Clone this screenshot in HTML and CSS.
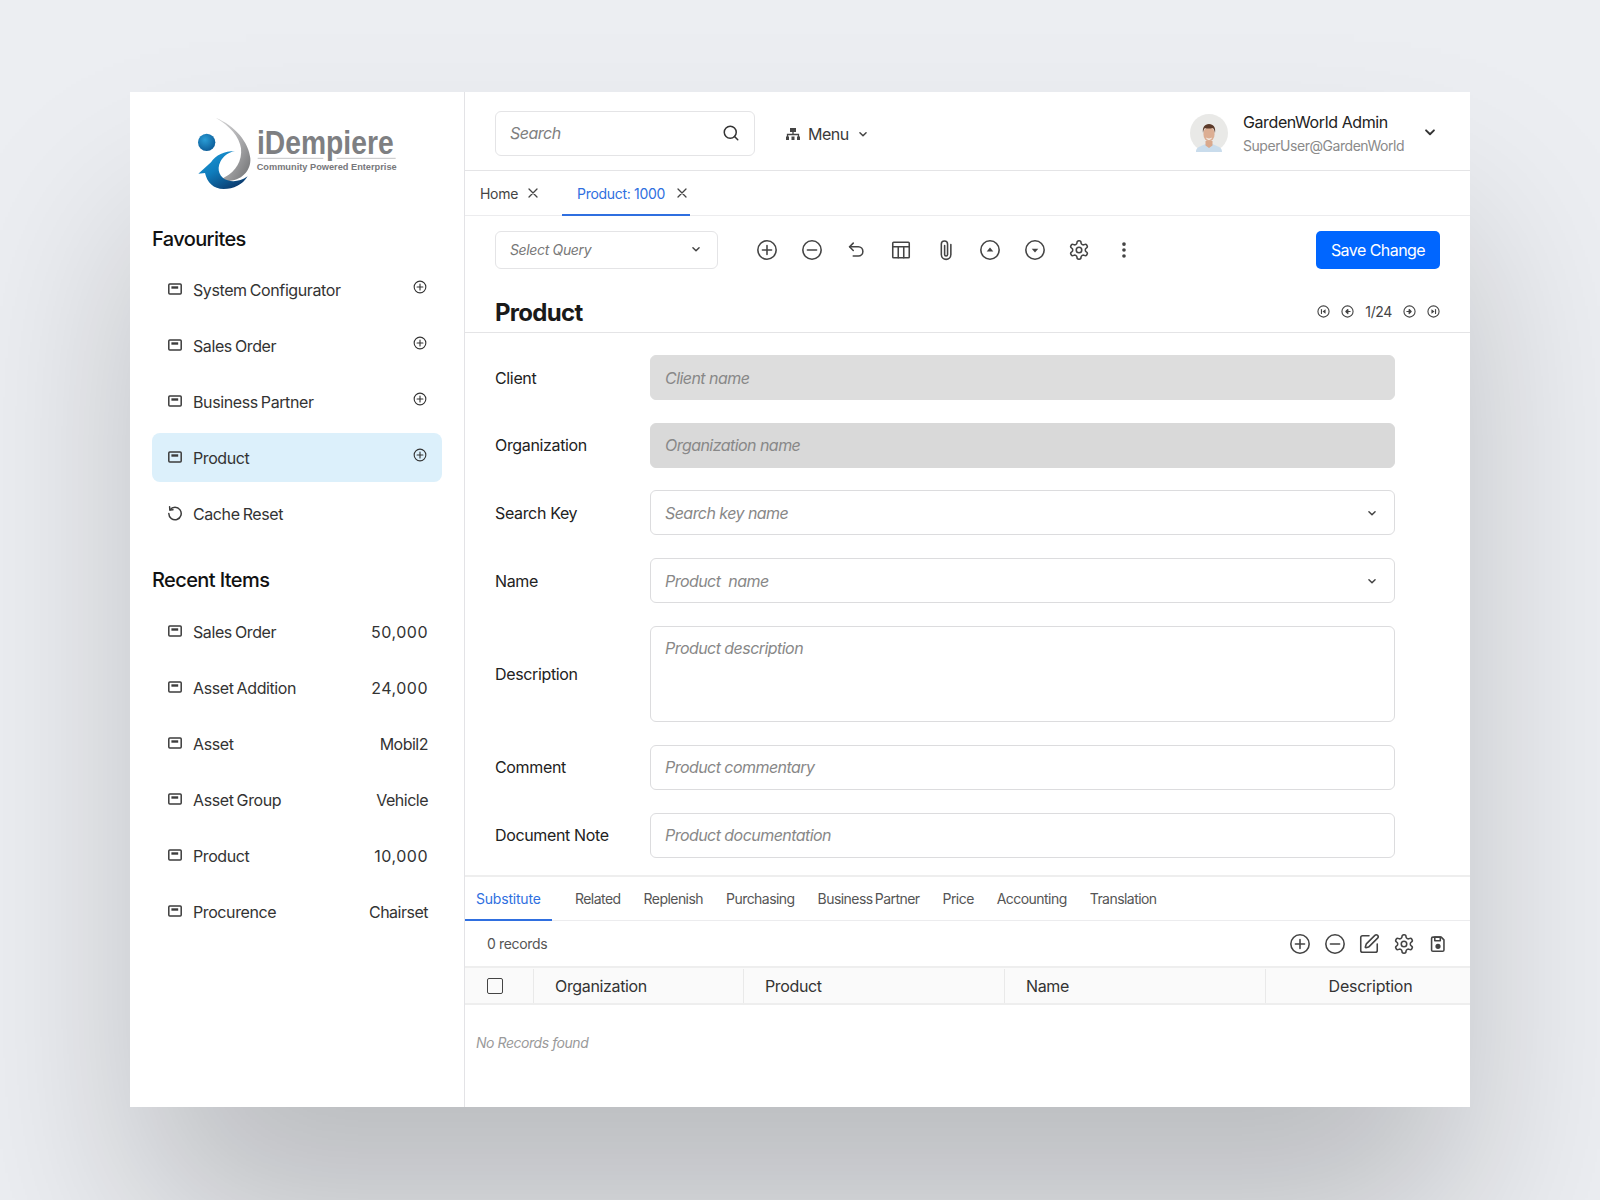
FILE: index.html
```html
<!DOCTYPE html>
<html lang="en">
<head>
    <meta charset="UTF-8">
    <title>iDempiere - Product</title>
    <link rel="stylesheet" href="styles.css">
</head>
<body>
    <!-- Shared icons -->
    <svg class="sprite" xmlns="http://www.w3.org/2000/svg">
        <symbol id="i-doc" viewBox="0 0 16 16"><rect x="1.800" y="3" width="12.400" height="10" rx="1"/><path d="M4.400 5.300h6.800v2.400H4.400z" fill="currentColor" stroke="none"/></symbol>
        <symbol id="i-plus" viewBox="0 0 24 24"><circle cx="12" cy="12" r="10"/><path d="M12 7v10M7 12h10"/></symbol>
        <symbol id="i-minus" viewBox="0 0 24 24"><circle cx="12" cy="12" r="10"/><path d="M7 12h10"/></symbol>
        <symbol id="i-undo" viewBox="0 0 24 24"><path d="M9 4.500 5 8.500l4 4"/><path d="M5 8.500h9.500a5 5 0 0 1 0 10H9"/></symbol>
        <symbol id="i-table" viewBox="0 0 24 24"><rect x="3" y="3.500" width="18" height="17" rx="1"/><path d="M3 8.500h18M9 8.500v12M15 8.500v12" /></symbol>
        <symbol id="i-clip" viewBox="0 0 24 24"><path d="M10.500 7v10a1.600 1.600 0 0 0 3.200 0V5.500a3.400 3.400 0 0 0-6.800 0V17a5.200 5.200 0 0 0 10.400 0V6"/></symbol>
        <symbol id="i-up" viewBox="0 0 24 24"><circle cx="12" cy="12" r="10"/><path d="M12 9.300l3.600 4.200H8.400z" fill="currentColor" stroke="none"/></symbol>
        <symbol id="i-down" viewBox="0 0 24 24"><circle cx="12" cy="12" r="10"/><path d="M12 14.700l3.600-4.200H8.400z" fill="currentColor" stroke="none"/></symbol>
        <symbol id="i-gear" viewBox="0 0 24 24"><path d="M12.220 2h-.44a2 2 0 0 0-2 2v.18a2 2 0 0 1-1 1.730l-.43.25a2 2 0 0 1-2 0l-.15-.08a2 2 0 0 0-2.730.73l-.22.38a2 2 0 0 0 .73 2.730l.15.1a2 2 0 0 1 1 1.720v.51a2 2 0 0 1-1 1.740l-.15.09a2 2 0 0 0-.73 2.730l.22.38a2 2 0 0 0 2.730.73l.15-.08a2 2 0 0 1 2 0l.43.25a2 2 0 0 1 1 1.730V20a2 2 0 0 0 2 2h.44a2 2 0 0 0 2-2v-.18a2 2 0 0 1 1-1.730l.43-.25a2 2 0 0 1 2 0l.15.08a2 2 0 0 0 2.730-.73l.22-.39a2 2 0 0 0-.73-2.730l-.15-.08a2 2 0 0 1-1-1.740v-.5a2 2 0 0 1 1-1.740l.15-.09a2 2 0 0 0 .73-2.730l-.22-.38a2 2 0 0 0-2.730-.73l-.15.08a2 2 0 0 1-2 0l-.43-.25a2 2 0 0 1-1-1.730V4a2 2 0 0 0-2-2z"/><circle cx="12" cy="12" r="3"/></symbol>
        <symbol id="i-chev" viewBox="0 0 16 16"><path d="M4.500 6.500 8 10l3.500-3.500"/></symbol>
        <symbol id="i-close" viewBox="0 0 12 12"><path d="M2 2l8 8M10 2l-8 8"/></symbol>
        <symbol id="i-first" viewBox="0 0 14 14"><circle cx="7" cy="7" r="6"/><path d="M4.800 4.800v4.400"/><path d="M9.200 4.600v4.800L5.900 7z" fill="currentColor" stroke="none"/></symbol>
        <symbol id="i-prev" viewBox="0 0 14 14"><circle cx="7" cy="7" r="6"/><path d="M7.400 4.800 5.200 7l2.200 2.200z" fill="currentColor"/><path d="M7 7h2.800"/></symbol>
        <symbol id="i-next" viewBox="0 0 14 14"><circle cx="7" cy="7" r="6"/><path d="M6.600 4.800 8.800 7l-2.200 2.200z" fill="currentColor"/><path d="M7 7H4.200"/></symbol>
        <symbol id="i-last" viewBox="0 0 14 14"><circle cx="7" cy="7" r="6"/><path d="M9.200 4.800v4.400"/><path d="M4.800 4.600v4.800L8.100 7z" fill="currentColor" stroke="none"/></symbol>
    </svg>

    <div class="app">
        <!-- Sidebar -->
        <aside class="sidebar">
            <svg class="logo" viewBox="0 0 675 270" xmlns="http://www.w3.org/2000/svg">
                <defs>
                    <linearGradient id="logoGrey" x1="0" y1="0" x2="1" y2="1">
                        <stop offset="0" stop-color="#d9d9da"/>
                        <stop offset="0.55" stop-color="#a9a9ab"/>
                        <stop offset="1" stop-color="#6d6e70"/>
                    </linearGradient>
                    <linearGradient id="logoBlue" x1="0" y1="0" x2="0.7" y2="1">
                        <stop offset="0" stop-color="#1f9ad6"/>
                        <stop offset="0.5" stop-color="#0f7dbd"/>
                        <stop offset="1" stop-color="#0b3b6e"/>
                    </linearGradient>
                    <radialGradient id="logoBall" cx="0.4" cy="0.35" r="0.7">
                        <stop offset="0" stop-color="#2a9dd6"/>
                        <stop offset="1" stop-color="#0b5a96"/>
                    </radialGradient>
                </defs>
                <circle cx="65" cy="112" r="26" fill="url(#logoBall)"/>
                <path d="M92 38C150 62 192 112 196 160 199 200 165 232 118 228 112 226 112 220 120 216 152 200 172 168 168 130 164 96 134 62 92 38Z" fill="url(#logoGrey)"/>
                <path d="M150 138C118 138 92 150 78 172L40 206 60 204C66 232 86 252 116 252 146 252 172 240 188 214 168 228 146 232 128 226 104 218 94 194 106 170 114 154 130 142 150 138Z" fill="url(#logoBlue)"/>
                <text class="logo-name" x="216" y="148" textLength="410" lengthAdjust="spacingAndGlyphs">iDempiere</text>
                <path class="logo-rule" d="M218 160H415M455 160H632"/>
                <text class="logo-tag" x="215" y="194" textLength="420" lengthAdjust="spacingAndGlyphs">Community Powered Enterprise</text>
            </svg>

            <h3 class="side-title">Favourites</h3>
            <ul class="side-list">
                <li class="side-item"><svg class="ico ico-doc"><use href="#i-doc"/></svg><span>System Configurator</span><svg class="ico ico-add"><use href="#i-plus"/></svg></li>
                <li class="side-item"><svg class="ico ico-doc"><use href="#i-doc"/></svg><span>Sales Order</span><svg class="ico ico-add"><use href="#i-plus"/></svg></li>
                <li class="side-item"><svg class="ico ico-doc"><use href="#i-doc"/></svg><span>Business Partner</span><svg class="ico ico-add"><use href="#i-plus"/></svg></li>
                <li class="side-item selected"><svg class="ico ico-doc"><use href="#i-doc"/></svg><span>Product</span><svg class="ico ico-add"><use href="#i-plus"/></svg></li>
                <li class="side-item">
                    <svg class="ico ico-doc" viewBox="0 0 16 16"><path d="M2.600 1.800 2.900 5l3.100-.3"/><path d="M3 4.900A6.200 6.200 0 1 1 1.800 8.600"/></svg>
                    <span>Cache Reset</span>
                </li>
            </ul>

            <h3 class="side-title recent">Recent Items</h3>
            <ul class="side-list">
                <li class="side-item"><svg class="ico ico-doc"><use href="#i-doc"/></svg><span>Sales Order</span><em class="num">50,000</em></li>
                <li class="side-item"><svg class="ico ico-doc"><use href="#i-doc"/></svg><span>Asset Addition</span><em class="num">24,000</em></li>
                <li class="side-item"><svg class="ico ico-doc"><use href="#i-doc"/></svg><span>Asset</span><em>Mobil2</em></li>
                <li class="side-item"><svg class="ico ico-doc"><use href="#i-doc"/></svg><span>Asset Group</span><em>Vehicle</em></li>
                <li class="side-item"><svg class="ico ico-doc"><use href="#i-doc"/></svg><span>Product</span><em class="num">10,000</em></li>
                <li class="side-item"><svg class="ico ico-doc"><use href="#i-doc"/></svg><span>Procurence</span><em>Chairset</em></li>
            </ul>
        </aside>

        <main class="main">
            <!-- Top bar -->
            <header class="topbar">
                <div class="search">
                    <span>Search</span>
                    <svg class="ico ico-search" viewBox="0 0 24 24"><circle cx="11" cy="11" r="8"/><path d="m21 21-4.300-4.300"/></svg>
                </div>
                <div class="menu">
                    <svg class="menu-icon" viewBox="0 0 16 16"><path d="M5 2h6v4H5z" fill="currentColor"/><path d="M8 6v3M2.500 11V8.500h11V11" fill="none" stroke="currentColor" stroke-width="1.300"/><path d="M1 10.500h3V14H1zM6.500 10.500h3V14h-3zM12 10.500h3V14h-3z" fill="currentColor"/></svg>
                    <span>Menu</span>
                    <svg class="ico ico-chev-sm"><use href="#i-chev"/></svg>
                </div>
                <div class="user">
                    <svg class="avatar" viewBox="0 0 38 38">
                        <circle cx="19" cy="19" r="19" fill="#e9e9e7"/>
                        <path d="M6 38c0-2 .5-4 4-5.500l5.500-2.500 7 0 5.500 2.500c3.500 1.500 4 3.500 4 5.500z" fill="#c9dcec"/>
                        <path d="M15.500 27h7v4.500l-3.500 2.500-3.500-2.500z" fill="#d9a88c"/>
                        <ellipse cx="19" cy="20" rx="5.600" ry="7.500" fill="#dcae93"/>
                        <path d="M13 19c-.8-5.500 1.500-9 6-9s7 3.500 6 9c-.6-3-1.300-4.500-2.500-5-2.500.8-5.500.8-7.500 0-1 .8-1.600 2.500-2 5z" fill="#5b3a29"/>
                        <path d="M16 23.500c2 1.300 4 1.300 6 0-.6 1.800-1.600 2.400-3 2.400s-2.400-.6-3-2.400z" fill="#f4efe9"/>
                    </svg>
                    <div class="user-text">
                        <div class="user-name">GardenWorld Admin</div>
                        <div class="user-role">SuperUser@GardenWorld</div>
                    </div>
                    <svg class="ico ico-chev-lg"><use href="#i-chev"/></svg>
                </div>
            </header>

            <!-- Window tabs -->
            <nav class="win-tabs">
                <div class="win-tab">Home <svg class="ico ico-close"><use href="#i-close"/></svg></div>
                <div class="win-tab active"><span>Product: 1000</span> <svg class="ico ico-close"><use href="#i-close"/></svg></div>
            </nav>

            <!-- Toolbar -->
            <div class="toolbar">
                <div class="query">
                    <span>Select Query</span>
                    <svg class="ico ico-chev-sm"><use href="#i-chev"/></svg>
                </div>
                <div class="tools">
                    <svg class="ico tool"><use href="#i-plus"/></svg>
                    <svg class="ico tool"><use href="#i-minus"/></svg>
                    <svg class="ico tool"><use href="#i-undo"/></svg>
                    <svg class="ico tool"><use href="#i-table"/></svg>
                    <svg class="ico tool"><use href="#i-clip"/></svg>
                    <svg class="ico tool"><use href="#i-up"/></svg>
                    <svg class="ico tool"><use href="#i-down"/></svg>
                    <svg class="ico tool"><use href="#i-gear"/></svg>
                    <svg class="tool dots" viewBox="0 0 24 24"><circle cx="12" cy="5.500" r="2"/><circle cx="12" cy="12" r="2"/><circle cx="12" cy="18.500" r="2"/></svg>
                </div>
                <button class="save-btn">Save Change</button>
            </div>

            <div class="title-row">
                <h1>Product</h1>
                <div class="pager">
                    <svg class="ico page-ico"><use href="#i-first"/></svg>
                    <svg class="ico page-ico"><use href="#i-prev"/></svg>
                    <span>1/24</span>
                    <svg class="ico page-ico"><use href="#i-next"/></svg>
                    <svg class="ico page-ico"><use href="#i-last"/></svg>
                </div>
            </div>

            <!-- Form -->
            <form class="form">
                <label>Client</label>
                <div class="field disabled">Client name</div>
                <label>Organization</label>
                <div class="field disabled darker">Organization name</div>
                <label>Search Key</label>
                <div class="field">Search key name<svg class="ico ico-chev-sm"><use href="#i-chev"/></svg></div>
                <label>Name</label>
                <div class="field">Product&nbsp; name<svg class="ico ico-chev-sm"><use href="#i-chev"/></svg></div>
                <label>Description</label>
                <div class="field area">Product description</div>
                <label>Comment</label>
                <div class="field">Product commentary</div>
                <label>Document Note</label>
                <div class="field">Product documentation</div>
            </form>

            <!-- Detail tabs -->
            <nav class="sub-tabs">
                <div class="sub-tab active">Substitute</div>
                <div class="sub-tab">Related</div>
                <div class="sub-tab">Replenish</div>
                <div class="sub-tab">Purchasing</div>
                <div class="sub-tab">Business Partner</div>
                <div class="sub-tab">Price</div>
                <div class="sub-tab">Accounting</div>
                <div class="sub-tab">Translation</div>
            </nav>

            <div class="records">
                <span>0 records</span>
                <div class="record-tools">
                    <svg class="ico tool"><use href="#i-plus"/></svg>
                    <svg class="ico tool"><use href="#i-minus"/></svg>
                    <svg class="ico tool" viewBox="0 0 24 24"><path d="M12 3H5a2 2 0 0 0-2 2v14a2 2 0 0 0 2 2h14a2 2 0 0 0 2-2v-7"/><path d="M18.375 2.625a1 1 0 0 1 3 3l-9.013 9.014a2 2 0 0 1-.853.505l-2.873.84a.5.5 0 0 1-.62-.62l.84-2.873a2 2 0 0 1 .506-.852z"/></svg>
                    <svg class="ico tool"><use href="#i-gear"/></svg>
                    <svg class="ico tool" viewBox="0 0 24 24"><path d="M6.500 4.500h9l3 3v11a1.500 1.500 0 0 1-1.500 1.500H6.500A1.500 1.500 0 0 1 5 18.500V6a1.500 1.500 0 0 1 1.500-1.500z"/><path d="M8.500 4.500h6v4h-6z"/><circle cx="12" cy="14.500" r="2" fill="currentColor"/></svg>
                </div>
            </div>

            <div class="grid-head">
                <div class="cell check"><span class="checkbox"></span></div>
                <div class="cell">Organization</div>
                <div class="cell">Product</div>
                <div class="cell">Name</div>
                <div class="cell center">Description</div>
            </div>
            <p class="empty">No Records found</p>
        </main>
    </div>
</body>
</html>
```

FILE: styles.css
```css
* {
    margin: 0;
    padding: 0;
    box-sizing: border-box;
}

body {
    height: 1200px;
    background: #eceef2;
    font-family: "Inter", "Noto Sans", sans-serif;
    font-size: 16px;
    color: #333;
    letter-spacing: -0.35px;
    overflow: hidden;
}

.sprite {
    display: none;
}

ul {
    list-style: none;
}

.ico {
    fill: none;
    stroke: currentColor;
    stroke-width: 1.5;
    stroke-linecap: round;
    stroke-linejoin: round;
    flex: none;
}

.app {
    display: flex;
    width: 1340px;
    height: 1015px;
    margin: 92px 0 0 130px;
    background: #fff;
    box-shadow: 0 128px 180px -10px rgba(0, 0, 0, 0.21);
}

/* Sidebar */
.sidebar {
    width: 335px;
    flex: none;
    padding: 13px 22px 0;
    border-right: 1px solid #e3e3e6;
}

.main {
    flex: 1;
    min-width: 0;
}

.logo {
    display: block;
    width: 225px;
    height: 90px;
    margin-left: 33px;
    overflow: visible;
}

.logo-name {
    font-family: "Liberation Sans", sans-serif;
    font-weight: 700;
    font-size: 97px;
    fill: #7e7f82;
    letter-spacing: 0;
}

.logo-tag {
    font-family: "Liberation Sans", sans-serif;
    font-weight: 700;
    font-size: 29px;
    fill: #77787b;
    letter-spacing: 0;
}

.logo-rule {
    stroke: #a5a6a8;
    stroke-width: 2;
}

.side-title {
    margin: 32px 0 14.5px;
    font-size: 20px;
    line-height: 24px;
    font-weight: 500;
    letter-spacing: -0.6px;
    color: #111;
}

.side-title.recent {
    margin: 29.5px 0 15px;
}

.side-list {
    display: flex;
    flex-direction: column;
    gap: 7.1px;
}

.side-item {
    display: flex;
    align-items: center;
    height: 49px;
    padding: 0 15px;
    border-radius: 8px;
    letter-spacing: -0.4px;
    word-spacing: -1px;
}

.side-item.selected {
    background: #dcf0fb;
    margin-top: -1px;
    margin-bottom: 1px;
    padding-top: 2px;
}

.side-item span {
    flex: 1;
}

.side-item em {
    margin-right: -1px;
    font-style: normal;
    letter-spacing: -0.5px;
}

.side-item em.num {
    letter-spacing: 0.5px;
}

.ico-doc {
    width: 16px;
    height: 16px;
    margin: 0 10px 2px 0;
    color: #3c3c3c;
    stroke-width: 1.5;
}

.ico-add {
    width: 14px;
    height: 14px;
    margin-bottom: 6px;
    stroke-width: 1.9;
    color: #333;
}

/* Top bar */
.topbar {
    display: flex;
    align-items: center;
    height: 79px;
    padding: 4px 31px 0 30px;
    border-bottom: 1px solid #e4e4e6;
}

.search {
    display: flex;
    align-items: center;
    justify-content: space-between;
    width: 260px;
    height: 45px;
    padding: 0 14px 0 14px;
    border: 1px solid #e4e4e6;
    border-radius: 6px;
    font-style: italic;
    letter-spacing: -0.5px;
    color: #808080;
}

.ico-search {
    width: 18px;
    height: 18px;
    color: #333;
    stroke-width: 2;
}

.menu {
    display: flex;
    align-items: center;
    gap: 7px;
    margin: 2px 0 0 30px;
    letter-spacing: -0.5px;
    color: #3a3a3a;
}

.menu-icon {
    width: 16px;
    height: 16px;
    color: #444;
}

.ico-chev-sm {
    width: 14px;
    height: 14px;
    stroke-width: 1.7;
    color: #444;
}

.user {
    display: flex;
    align-items: center;
    margin-left: auto;
}

.avatar {
    width: 38px;
    height: 38px;
    margin-right: 15px;
}

.user-text {
    width: 178px;
    letter-spacing: -0.4px;
}

.user-name {
    font-size: 16px;
    line-height: 22px;
    color: #222;
}

.user-role {
    margin-top: 3px;
    font-size: 14px;
    line-height: 20px;
    letter-spacing: -0.45px;
    color: #8a8a8a;
}

.ico-chev-lg {
    width: 18px;
    height: 18px;
    color: #333;
    stroke-width: 1.7;
    margin-bottom: 2px;
}

/* Window tabs */
.win-tabs {
    display: flex;
    height: 45px;
    border-bottom: 1px solid #ececee;
}

.win-tab {
    display: flex;
    align-items: center;
    gap: 9px;
    padding: 0 2px 0 15px;
    margin-right: 21px;
    font-size: 14px;
    letter-spacing: -0.3px;
    color: #444;
}

.win-tab.active {
    gap: 11px;
    margin-bottom: -1px;
    border-bottom: 2px solid #2f6fe0;
    padding-top: 1px;
}

.win-tab.active span {
    color: #2f6fe0;
}

.ico-close {
    width: 12px;
    height: 12px;
    stroke-width: 1.3;
    color: #444;
}

/* Toolbar */
.toolbar {
    display: flex;
    align-items: center;
    padding: 15px 30px 0;
}

.query {
    display: flex;
    align-items: center;
    justify-content: space-between;
    width: 223px;
    height: 38px;
    padding: 0 14px 2px 14px;
    border: 1px solid #e4e4e6;
    border-radius: 6px;
    font-size: 14px;
    font-style: italic;
    color: #777;
}

.tools {
    display: flex;
    align-items: center;
    gap: 22.65px;
    margin: 0 0 1px 38px;
    color: #444;
}

.tool {
    width: 22px;
    height: 22px;
    stroke-width: 1.7;
}

.dots {
    fill: #444;
}

.save-btn {
    width: 124px;
    height: 38px;
    margin-left: auto;
    border: none;
    border-radius: 5px;
    background: #0066ff;
    color: #fff;
    font-family: inherit;
    font-size: 16px;
    letter-spacing: -0.55px;
}

.title-row {
    display: flex;
    align-items: center;
    justify-content: space-between;
    margin-top: 29px;
    padding: 0 30px 4px;
    border-bottom: 1px solid #e4e4e6;
}

.title-row h1 {
    font-size: 24px;
    line-height: 30px;
    font-weight: 700;
    letter-spacing: -0.7px;
    color: #1a1a1a;
}

.pager {
    display: flex;
    align-items: center;
    gap: 11px;
    margin-bottom: 3px;
    font-size: 14px;
    color: #444;
}

.page-ico {
    width: 13px;
    height: 13px;
    stroke-width: 1.2;
}

/* Form */
.form {
    display: grid;
    grid-template-columns: 155px 745px;
    row-gap: 22.7px;
    align-items: center;
    padding: 22px 30px 17.5px;
}

.form label {
    color: #222;
}

.field {
    display: flex;
    align-items: center;
    justify-content: space-between;
    height: 45px;
    padding: 0 15px 0 14px;
    border: 1px solid #dcdcde;
    border-radius: 6px;
    font-style: italic;
    letter-spacing: -0.55px;
    color: #888;
}

.field.disabled {
    background: #dddddd;
    border-color: #dddddd;
}

.field.darker {
    background: #d9d9d9;
    border-color: #d9d9d9;
}

.field.area {
    align-items: flex-start;
    height: 96.5px;
    padding-top: 11px;
}

/* Detail tabs */
.sub-tabs {
    display: flex;
    height: 46px;
    border-top: 2px solid #eeeeee;
    border-bottom: 1px solid #ececee;
    font-size: 14px;
    letter-spacing: -0.55px;
    word-spacing: -1.2px;
    color: #555;
}

.sub-tab {
    display: flex;
    align-items: center;
    padding: 0 11.5px;
}

.sub-tab.active {
    width: 87px;
    margin-right: 11.5px;
    margin-bottom: -1px;
    padding: 0 0 0 11px;
    border-bottom: 2px solid #2f6fe0;
    letter-spacing: -0.2px;
    color: #2f6fe0;
}

.records {
    display: flex;
    align-items: center;
    justify-content: space-between;
    height: 45px;
    padding: 0 21px 0 22px;
    font-size: 14px;
    color: #555;
}

.record-tools {
    display: flex;
    gap: 12.5px;
    color: #444;
}

.grid-head {
    display: grid;
    grid-template-columns: 69px 210px 261px 261px 1fr;
    height: 39px;
    padding-top: 0.5px;
    background: #fafafa;
    border-top: 2px solid #eeeeee;
    border-bottom: 2px solid #eeeeee;
}

.cell {
    display: flex;
    align-items: center;
    padding-left: 21px;
    border-right: 1.5px solid #e9e9e9;
    color: #333;
}

.cell.check {
    padding-left: 22px;
}

.cell.center {
    justify-content: center;
    padding-left: 5px;
    border-right: none;
    letter-spacing: -0.25px;
}

.checkbox {
    width: 16px;
    height: 16px;
    border: 1.5px solid #444;
    border-radius: 2px;
}

.empty {
    margin: 29px 0 0 11px;
    font-size: 14px;
    line-height: 18px;
    font-style: italic;
    letter-spacing: -0.45px;
    color: #9a9a9a;
}
```
